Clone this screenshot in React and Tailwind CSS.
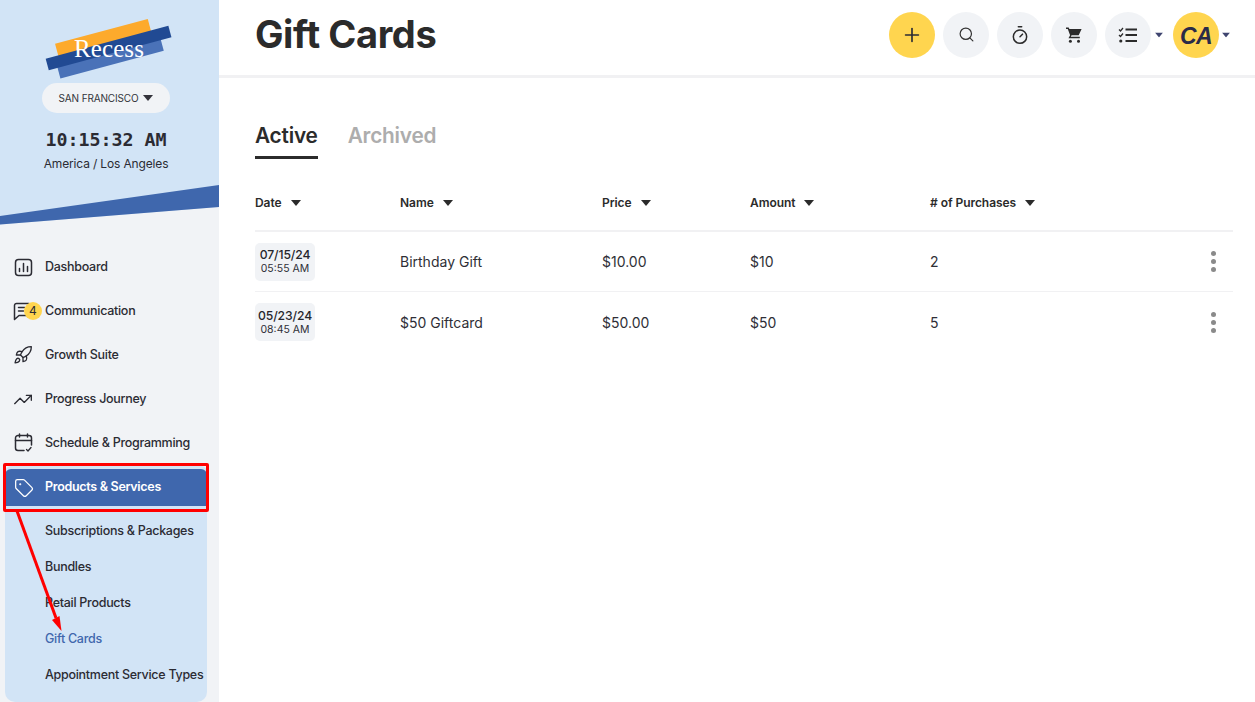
import React from "react";
import { Plus, Search, Timer, Rocket, TrendingUp, Tag } from "lucide-react";

const font = { fontFamily: "Inter, 'Liberation Sans', sans-serif" };

function Caret({ className = "" }) {
  return (
    <svg width="10" height="6" viewBox="0 0 10 6" className={className}>
      <path d="M0 0h10L5 6z" fill="currentColor" />
    </svg>
  );
}

function ChecklistIcon() {
  return (
    <svg width="20" height="16" viewBox="0 0 20 16" fill="none" stroke="#2b2b2b">
      <path d="M1 2.500l1.500 1.500L5 1M1 8l1.500 1.500L5 6.500" strokeWidth="1.3" />
      <path d="M7.500 2.500H19M7.500 8H19M7.500 14H19" strokeWidth="2.2" />
      <circle cx="2.800" cy="14" r="1.600" fill="#2b2b2b" stroke="none" />
    </svg>
  );
}

function CartIcon() {
  return (
    <svg width="16" height="16" viewBox="0 0 16 16" fill="#2b2b2b">
      <path d="M0 .5h2.700l.7 1.600H15.600l-2.900 6.200H5.600L4.800 9.800h9v1.400H2.500L4.100 8.200 1.800 1.900H0z" />
      <circle cx="4.400" cy="14.200" r="1.500" />
      <circle cx="12.500" cy="14.200" r="1.500" />
    </svg>
  );
}

function DashIcon(p) {
  return (
    <svg width="19" height="19" viewBox="0 0 19 19" fill="none" stroke="currentColor" strokeWidth="1.500" strokeLinecap="round" {...p}>
      <rect x="1.500" y="1.500" width="16" height="16" rx="3" />
      <path d="M5.500 13.500v-3M9.500 13.500v-8M13.500 13.500v-5" />
    </svg>
  );
}

function ChatIcon(p) {
  return (
    <svg width="20" height="19" viewBox="0 0 20 19" fill="none" stroke="currentColor" strokeWidth="1.500" strokeLinecap="round" strokeLinejoin="round" {...p}>
      <path d="M1.500 17.500V3.500a2 2 0 0 1 2-2h12a2 2 0 0 1 2 2v8a2 2 0 0 1-2 2H6z" />
      <path d="M5.500 5.500h6M5.500 9h5" />
    </svg>
  );
}

function CalIcon(p) {
  return (
    <svg width="19" height="20" viewBox="0 0 19 20" fill="none" stroke="currentColor" strokeWidth="1.500" strokeLinecap="round" strokeLinejoin="round" {...p}>
      <path d="M10 17.500H4a2.500 2.500 0 0 1-2.500-2.500V5A2.500 2.500 0 0 1 4 2.500h11A2.500 2.500 0 0 1 17.500 5v7" />
      <path d="M1.500 7.500h16M5.500 1v3M13.500 1v3" />
      <path d="M12.500 16.500l1.500 1.500 3-3.500" strokeWidth="1.300" />
    </svg>
  );
}

function Logo() {
  return (
    <div className="relative w-[128px] h-[64px] mt-[18px]">
      <div className="absolute left-[14px] top-[13px] w-[96px] h-[20px] bg-[#fdaa2c] -rotate-[15deg]" />
      <div className="absolute left-[13.5px] top-[27px] w-[107px] h-[20px] bg-[#4a72b8] -rotate-[15deg]" />
      <div className="absolute left-[2.5px] top-[24px] w-[127px] h-[11.5px] bg-[#214a93] -rotate-[15deg]" />
      <div
        className="absolute left-[32px] top-[17px] text-white text-[25px] leading-[28px] font-normal tracking-[0.1px]"
        style={{ fontFamily: "'Liberation Serif', serif" }}
      >
        Recess
      </div>
    </div>
  );
}

const navItems = [
  { label: "Dashboard", Icon: DashIcon },
  { label: "Communication", Icon: ChatIcon, badge: "4" },
  { label: "Growth Suite", Icon: Rocket, size: 20 },
  { label: "Progress Journey", Icon: TrendingUp, size: 21 },
  { label: "Schedule & Programming", Icon: CalIcon },
];

const subItems = ["Subscriptions & Packages", "Bundles", "Retail Products", "Gift Cards", "Appointment Service Types"];

function NavRow({ label, Icon, badge, size }) {
  return (
    <div className="relative flex items-center h-[44px] pl-[13px] text-[#2b2b33]">
      <div className="w-[20px] shrink-0 flex justify-center">
        {size ? <Icon size={size} strokeWidth={1.6} /> : <Icon />}
      </div>
      {badge && (
        <span className="absolute left-[24px] top-[13px] w-[18px] h-[18px] rounded-full bg-[#ffd54f] flex items-center justify-center text-[12px] leading-none">
          {badge}
        </span>
      )}
      <span className="ml-[12px] text-[12.5px] font-medium tracking-[-0.28px]">{label}</span>
    </div>
  );
}

function Sidebar() {
  return (
    <aside className="w-[219px] shrink-0 h-[702px] overflow-hidden bg-[#f1f3f6] flex flex-col">
      <div className="relative h-[225px] shrink-0 bg-[#d2e4f6] flex flex-col items-center pr-[7px]">
        <Logo />
        <div className="mt-[1px] w-[128px] h-[30px] rounded-full bg-[#f1f3f6] flex items-center justify-center gap-[5px] text-[#33333b]">
          <span className="text-[10px] tracking-[-0.15px]">SAN FRANCISCO</span>
          <Caret />
        </div>
        <div
          className="mt-[15px] text-[18.3px] leading-[24px] text-[#2b2b33]"
          style={{ fontFamily: "'DejaVu Sans Mono', monospace", fontWeight: 600 }}
        >
          10:15:32 AM
        </div>
        <div className="mt-[4px] text-[12px] leading-[16px] text-[#2b2b33] tracking-[-0.15px]">America / Los Angeles</div>
        <svg className="absolute left-0 top-[185px]" width="219" height="40" viewBox="0 0 219 40">
          <path d="M0 39.500L219 22V40H0z" fill="#f1f3f6" />
          <path d="M0 31L219 0V22L0 39.500z" fill="#3f67ad" />
        </svg>
      </div>
      <nav className="pt-[20px] flex flex-col">
        {navItems.map((n) => (
          <NavRow key={n.label} {...n} />
        ))}
      </nav>
      <div className="mx-[5px] w-[202px] mt-[1px] h-[236px] rounded-b-[10px] rounded-t-[6px] bg-[#d2e4f6] flex flex-col">
        <div className="mt-[3px] h-[37px] rounded-t-[6px] bg-[#3f67ad] flex items-center pl-[9px] text-white">
          <Tag size={20} strokeWidth={1.5} className="shrink-0" />
          <span className="ml-[11px] text-[12.5px] font-semibold tracking-[-0.3px]">Products &amp; Services</span>
        </div>
        <div className="mt-[7px] flex flex-col pl-[40px]">
          {subItems.map((s) => (
            <div
              key={s}
              className={`h-[36px] flex items-center whitespace-nowrap text-[12.5px] font-medium tracking-[-0.28px] ${
                s === "Gift Cards" ? "text-[#3f67ad]" : "text-[#2b2b33]"
              }`}
            >
              {s}
            </div>
          ))}
        </div>
      </div>
    </aside>
  );
}

function RoundBtn({ children, yellow }) {
  return (
    <button className={`w-[46px] h-[46px] rounded-full flex items-center justify-center ${yellow ? "bg-[#ffd54f]" : "bg-[#f1f3f6]"}`}>
      {children}
    </button>
  );
}

function Header() {
  return (
    <header className="h-[78px] shrink-0 border-b-[3px] border-[#f1f1f3] flex items-center pl-[36px] pr-[24px] pb-[6px]">
      <h1 className="text-[38px] leading-[44px] font-bold text-[#2b2b2b] tracking-[-0.4px] mt-[-2px]">Gift Cards</h1>
      <div className="ml-auto flex items-center">
        <RoundBtn yellow><Plus size={22} strokeWidth={1.8} color="#2b2b33" /></RoundBtn>
        <div className="ml-[8px]"><RoundBtn><Search size={17} strokeWidth={1.7} color="#333" /></RoundBtn></div>
        <div className="ml-[8px]"><RoundBtn><Timer size={20} strokeWidth={1.8} color="#2b2b2b" /></RoundBtn></div>
        <div className="ml-[8px]"><RoundBtn><CartIcon /></RoundBtn></div>
        <div className="ml-[8px]"><RoundBtn><ChecklistIcon /></RoundBtn></div>
        <Caret className="ml-[3px] text-[#3f4570] scale-[0.8]" />
        <div className="ml-[9px]">
          <RoundBtn yellow>
            <span className="text-[23px] leading-[46px] mt-[2px] font-bold italic text-[#2a2a48] tracking-[-0.6px]" style={{ fontFamily: "'Liberation Sans', sans-serif" }}>CA</span>
          </RoundBtn>
        </div>
        <Caret className="ml-[2px] text-[#3f4570] scale-[0.8]" />
      </div>
    </header>
  );
}

const cols = "grid grid-cols-[145px_202px_148px_180px_1fr_40px] items-center";

function Row({ date, time, name, price, amount, count }) {
  return (
    <div className={`${cols} h-[60px] border-b border-[#f1f1f3] last:border-b-0 text-[14px] text-[#2f2f36]`}>
      <div className="w-[60px] h-[38px] rounded-[5px] bg-[#f1f3f6] flex flex-col items-center justify-center">
        <span className="text-[12.2px] leading-[15px] font-medium text-[#26262c] tracking-[-0.1px]">{date}</span>
        <span className="text-[10.5px] leading-[14px]">{time}</span>
      </div>
      <div>{name}</div>
      <div>{price}</div>
      <div>{amount}</div>
      <div>{count}</div>
      <div className="flex flex-col items-center gap-[3px]">
        <span className="w-[5px] h-[5px] rounded-full bg-[#8a8a8a]" />
        <span className="w-[5px] h-[5px] rounded-full bg-[#8a8a8a]" />
        <span className="w-[5px] h-[5px] rounded-full bg-[#8a8a8a]" />
      </div>
    </div>
  );
}

function HeadCell({ children }) {
  return (
    <div className="flex items-center gap-[9px] text-[12px] font-semibold text-[#2b2b2b] tracking-[-0.05px]">
      {children}
      <Caret className="text-[#2b2b2b]" />
    </div>
  );
}

function Main() {
  return (
    <main className="flex-1 min-w-0 flex flex-col bg-white">
      <Header />
      <div className="pl-[36px] pr-[22px]">
        <div className="flex mt-[41px] gap-[30px] text-[20.8px] leading-[34px] font-semibold tracking-[-0.2px]">
          <div className="text-[#2b2b2b] h-[40px] border-b-[3px] border-[#2b2b2b]">Active</div>
          <div className="text-[#adadad]">Archived</div>
        </div>
        <div className={`${cols} mt-[14px] h-[59px] border-b-2 border-[#f1f1f3] pt-[3px]`}>
          <HeadCell>Date</HeadCell>
          <HeadCell>Name</HeadCell>
          <HeadCell>Price</HeadCell>
          <HeadCell>Amount</HeadCell>
          <HeadCell># of Purchases</HeadCell>
          <div />
        </div>
        <Row date="07/15/24" time="05:55 AM" name="Birthday Gift" price="$10.00" amount="$10" count="2" />
        <Row date="05/23/24" time="08:45 AM" name="$50 Giftcard" price="$50.00" amount="$50" count="5" />
      </div>
    </main>
  );
}

export default function App() {
  return (
    <div className="relative flex w-[1255px] h-[702px] overflow-hidden bg-white" style={font}>
      <Sidebar />
      <Main />
      <div className="absolute left-[3px] top-[463px] w-[206px] h-[49px] border-[3px] border-[#ff0000] rounded-[2px]" />
      <svg className="absolute left-0 top-0 pointer-events-none" width="220" height="702">
        <line x1="17" y1="511" x2="56" y2="618" stroke="#ff0000" strokeWidth="3" />
        <path d="M61.500 631L52 620L59.500 616z" fill="#ff0000" />
      </svg>
    </div>
  );
}
